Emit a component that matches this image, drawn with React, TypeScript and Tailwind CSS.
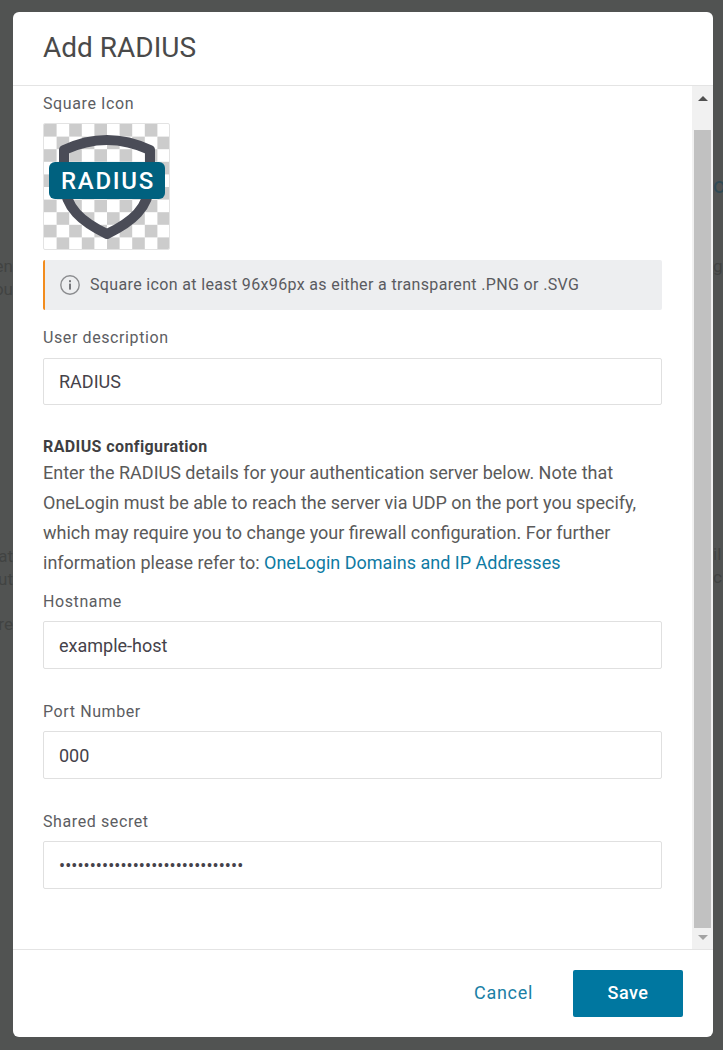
const font = { fontFamily: 'Roboto, sans-serif' };

function Checker() {
  // transparent-background pattern behind the logo
  const cells = [];
  for (let r = 0; r < 10; r++) {
    for (let c = 0; c < 10; c++) {
      if ((r + c) % 2 === 0) {
        cells.push(<rect key={`${r}-${c}`} x={c * 12.6} y={r * 12.6} width="12.6" height="12.6" fill="#cccccc" />);
      }
    }
  }
  return <g>{cells}</g>;
}

function RadiusLogo() {
  return (
    <div className="w-[127px] h-[127px] rounded-[2px] border border-[#e3e3e3] overflow-hidden relative">
      <svg width="125" height="125" viewBox="0 0 125 125" className="block">
        <Checker />
        <path
          d="M20 26 Q63 6 106 26 L106 58 C105 84 88 98 63 110 C38 98 21 84 20 58 Z"
          fill="none"
          stroke="#4a4c57"
          strokeWidth="10"
          strokeLinejoin="round"
        />
      </svg>
      <div className="absolute left-[5px] top-[38px] w-[116px] h-[37px] pl-[2px] rounded-[6px] bg-[#00617f] flex items-center justify-center">
        <span className="text-white text-[24px] font-medium tracking-[1.7px] leading-none">RADIUS</span>
      </div>
    </div>
  );
}

function InfoIcon() {
  return (
    <svg width="20" height="20" viewBox="0 0 20 20" className="shrink-0">
      <circle cx="10" cy="10" r="9.2" fill="none" stroke="#8b8c8f" strokeWidth="1.4" />
      <rect x="9" y="8.6" width="2" height="6" fill="#77787c" />
      <rect x="9" y="5.2" width="2" height="2" fill="#77787c" />
    </svg>
  );
}

function Field({ label, value, secret, gap = 'mb-[33px]', labelGap = 'mb-[9px]', height = 'h-[48px]' }: { label: string; value: string; secret?: boolean; gap?: string; labelGap?: string; height?: string }) {
  return (
    <div className={gap}>
      <div className={`text-[16px] leading-[20px] tracking-[0.6px] text-[#5c5d62] ${labelGap}`}>{label}</div>
      <div className={`${height} px-[15px] flex items-center rounded-[2px] border border-[#e0e0e0] text-[18px] text-[#45424a] ${secret ? 'tracking-[0.07px]' : ''}`}>
        {value}
      </div>
    </div>
  );
}

// page text showing either side of the dialog, under the dimmed backdrop
function LeftEdge() {
  return (
    <div className="w-[13px] shrink-0 overflow-hidden flex flex-col items-end text-[17px] leading-[23px] text-[#414342] whitespace-nowrap">
      <div className="mt-[255px]">en</div>
      <div>ou</div>
      <div className="mt-[244px]">at</div>
      <div>ut</div>
      <div className="mt-[22px]">ore</div>
    </div>
  );
}

function RightEdge() {
  return (
    <div className="w-[10px] shrink-0 overflow-hidden flex flex-col items-start text-[17px] leading-[23px] text-[#414342] whitespace-nowrap">
      <div className="mt-[172px] text-[22px] leading-[28px] text-[#2f4a55]">o</div>
      <div className="mt-[55px]">g</div>
      <div className="mt-[265px]">il</div>
      <div>c</div>
    </div>
  );
}

export default function App() {
  return (
    <div className="w-[723px] h-[1050px] bg-[#515352] flex overflow-hidden" style={font}>
      <LeftEdge />
      <div className="w-[700px] h-[1025px] mt-[12px] shrink-0 bg-white rounded-[6px] flex flex-col overflow-hidden">
        <div className="h-[74px] shrink-0 border-b border-[#e4e4e4] pl-[30px] pb-[2px] flex items-center">
          <h1 className="text-[28px] font-normal text-[#4a4a4a]">Add RADIUS</h1>
        </div>

        <div className="flex-1 flex min-h-0">
          <div className="flex-1 pl-[30px] pr-[30px]">
            <div className="text-[16px] leading-[20px] tracking-[0.6px] text-[#5c5d62] mt-[8px] mb-[9px]">Square Icon</div>
            <RadiusLogo />
            <div className="mt-[10px] h-[50px] bg-[#edeef0] border-l-2 border-[#f28c1e] rounded-[2px] flex items-center pl-[15px] gap-[10px]">
              <InfoIcon />
              <span className="text-[16px] tracking-[0.35px] text-[#5a5b60]">Square icon at least 96x96px as either a transparent .PNG or .SVG</span>
            </div>

            <div className="mt-[18px]">
              <Field label="User description" value="RADIUS" gap="mb-[30px]" labelGap="mb-[10px]" height="h-[47px]" />
            </div>

            <div className="text-[18px] leading-[30px] text-[#5a5a5a] mb-[14px]">
              <div className="font-bold text-[16px] tracking-[0.4px] leading-[23px] text-[#3f3f42]">RADIUS configuration</div>
              <p>
                Enter the RADIUS details for your authentication server below. Note that OneLogin must be able to reach the server via UDP on the port you specify, which may require you to change your firewall configuration. For further information please refer to:{' '}
                <a className="text-[#0f7ba3]">OneLogin Domains and IP Addresses</a>
              </p>
            </div>

            <Field label="Hostname" value="example-host" />
            <Field label="Port Number" value="000" />
            <Field label="Shared secret" value="••••••••••••••••••••••••••••••" secret />
          </div>

          <div className="w-[21px] shrink-0 bg-[#f1f1f1] flex flex-col items-center">
            <div className="h-[44px] w-full flex justify-center pt-[10px]">
              <div className="w-0 h-0 border-x-[5px] border-x-transparent border-b-[5px] border-b-[#505050]" />
            </div>
            <div className="flex-1 w-[17px] bg-[#c1c1c1]" />
            <div className="h-[21px] w-full flex justify-center pt-[7px]">
              <div className="w-0 h-0 border-x-[5px] border-x-transparent border-t-[5px] border-t-[#a3a3a3]" />
            </div>
          </div>
        </div>

        <div className="h-[88px] shrink-0 border-t border-[#e4e4e4] flex items-center justify-end pr-[30px] gap-[40px]">
          <button className="text-[18px] tracking-[0.7px] text-[#1b7fa5] mb-[2px]">Cancel</button>
          <button className="w-[110px] h-[47px] pb-[2px] rounded-[2px] bg-[#0077a0] text-white text-[18px] font-medium tracking-[0.5px]">Save</button>
        </div>
      </div>
      <RightEdge />
    </div>
  );
}
